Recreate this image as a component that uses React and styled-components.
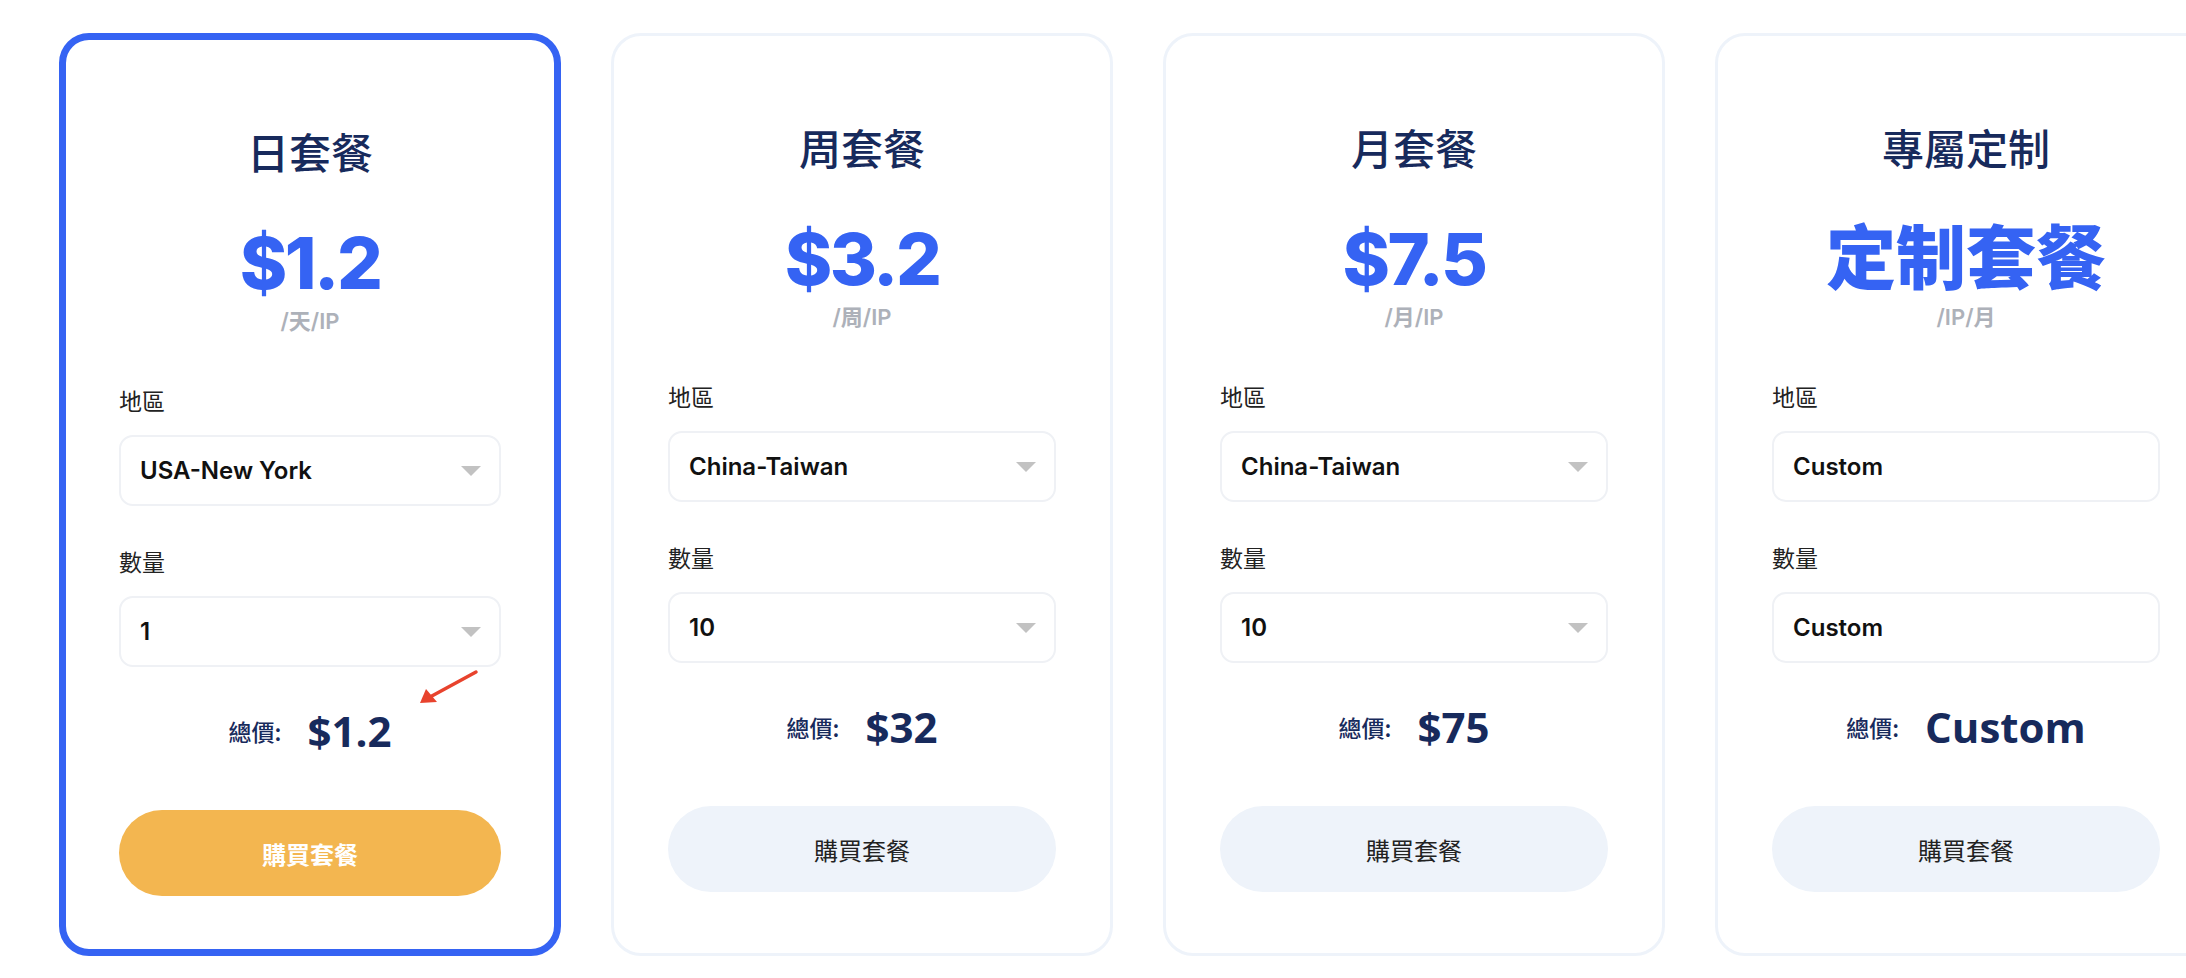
import styled, { createGlobalStyle } from "styled-components";

const GlobalStyle = createGlobalStyle`
  html, body {
    margin: 0;
    padding: 0;
    background: #ffffff;
    font-family: Inter, "Noto Sans CJK TC", sans-serif;
  }
`;

const plans = [
  { title: "日套餐", price: "$1.2", unit: "/天/IP", region: "USA-New York", qty: "1", total: "$1.2", active: true },
  { title: "周套餐", price: "$3.2", unit: "/周/IP", region: "China-Taiwan", qty: "10", total: "$32" },
  { title: "月套餐", price: "$7.5", unit: "/月/IP", region: "China-Taiwan", qty: "10", total: "$75" },
  { title: "專屬定制", price: "定制套餐", unit: "/IP/月", region: "Custom", qty: "Custom", total: "Custom", custom: true },
];

const Page = styled.div`
  width: 2186px;
  height: 978px;
  overflow: hidden;
  display: flex;
  gap: 50px;
  padding: 33px 0 0 59px;
  box-sizing: border-box;
`;

const Card = styled.div`
  position: relative;
  flex: 0 0 502px;
  height: 923px;
  box-sizing: border-box;
  border: ${(p) => (p.$active ? "7px solid #3563f3" : "3px solid #eef3fa")};
  border-radius: 30px;
  padding: ${(p) => (p.$active ? "86px 53px 0" : "86px 54px 0")};
  display: flex;
  flex-direction: column;
  align-items: stretch;
  background: #fff;
`;

const Title = styled.div`
  font-family: "Noto Sans CJK TC", sans-serif;
  font-size: 42px;
  line-height: 50px;
  font-weight: 500;
  color: #172a5c;
  text-align: center;
`;

const Price = styled.div`
  margin-top: 47px;
  font-family: Inter, "Noto Sans CJK TC", sans-serif;
  font-size: ${(p) => (p.$custom ? "70px" : "72px")};
  line-height: 80px;
  font-weight: 800;
  letter-spacing: ${(p) => (p.$custom ? "0" : "-2.5px")};
  color: #3563f3;
  text-align: center;
`;

const Unit = styled.div`
  margin-top: 4px;
  font-family: Inter, "Noto Sans CJK TC", sans-serif;
  font-size: 22px;
  line-height: 28px;
  font-weight: 600;
  color: #adb1b9;
  text-align: center;
`;

const Label = styled.div`
  margin-top: ${(p) => p.$gap}px;
  font-family: "Noto Sans CJK TC", sans-serif;
  font-size: 23px;
  line-height: 30px;
  color: #222;
`;

const Select = styled.div`
  margin-top: 20px;
  height: 71px;
  box-sizing: border-box;
  border: 2px solid #eff1f5;
  border-radius: 14px;
  padding: 0 18px 0 19px;
  display: flex;
  align-items: center;
  justify-content: space-between;
  font-family: Inter, sans-serif;
  font-size: 24px;
  font-weight: 600;
  color: #111;
`;

const Caret = styled.span`
  width: 0;
  height: 0;
  border-left: 10px solid transparent;
  border-right: 10px solid transparent;
  border-top: 10px solid #c2c2c2;
`;

const Total = styled.div`
  margin-top: 39px;
  display: flex;
  align-items: center;
  justify-content: center;
  gap: 26px;
  color: #172a5c;
`;

const TotalLabel = styled.span`
  font-family: "Noto Sans CJK TC", sans-serif;
  font-size: 23px;
  font-weight: 500;
`;

const TotalValue = styled.span`
  font-family: "Open Sans", sans-serif;
  font-size: 42px;
  line-height: 50px;
  font-weight: 700;
`;

const BuyButton = styled.button`
  margin-top: 54px;
  height: 86px;
  border: none;
  border-radius: 43px;
  background: ${(p) => (p.$active ? "#f3b650" : "#eef3fa")};
  color: ${(p) => (p.$active ? "#fff" : "#222")};
  font-family: "Noto Sans CJK TC", sans-serif;
  font-size: 24px;
  font-weight: ${(p) => (p.$active ? 700 : 400)};
  cursor: pointer;
`;

const Annotation = styled.svg`
  position: absolute;
  left: 354px;
  top: 632px;
  overflow: visible;
`;

const PlanCard = ({ plan }) => (
  <Card $active={plan.active}>
    <Title>{plan.title}</Title>
    <Price $custom={plan.custom}>{plan.price}</Price>
    <Unit>{plan.unit}</Unit>
    <Label $gap={50}>地區</Label>
    <Select>
      <span>{plan.region}</span>
      {!plan.custom && <Caret />}
    </Select>
    <Label $gap={40}>數量</Label>
    <Select>
      <span>{plan.qty}</span>
      {!plan.custom && <Caret />}
    </Select>
    <Total>
      <TotalLabel>總價:</TotalLabel>
      <TotalValue>{plan.total}</TotalValue>
    </Total>
    <BuyButton $active={plan.active}>購買套餐</BuyButton>
    {plan.active && (
      <Annotation width="60" height="36" viewBox="0 0 60 36">
        <line x1="56" y1="0" x2="10" y2="25" stroke="#e8432d" strokeWidth="3.5" strokeLinecap="round" />
        <polygon points="0,31 6,17 17,30" fill="#e8432d" />
      </Annotation>
    )}
  </Card>
);

export default function App() {
  return (
    <>
      <GlobalStyle />
      <Page>
        {plans.map((plan) => (
          <PlanCard key={plan.title} plan={plan} />
        ))}
      </Page>
    </>
  );
}
